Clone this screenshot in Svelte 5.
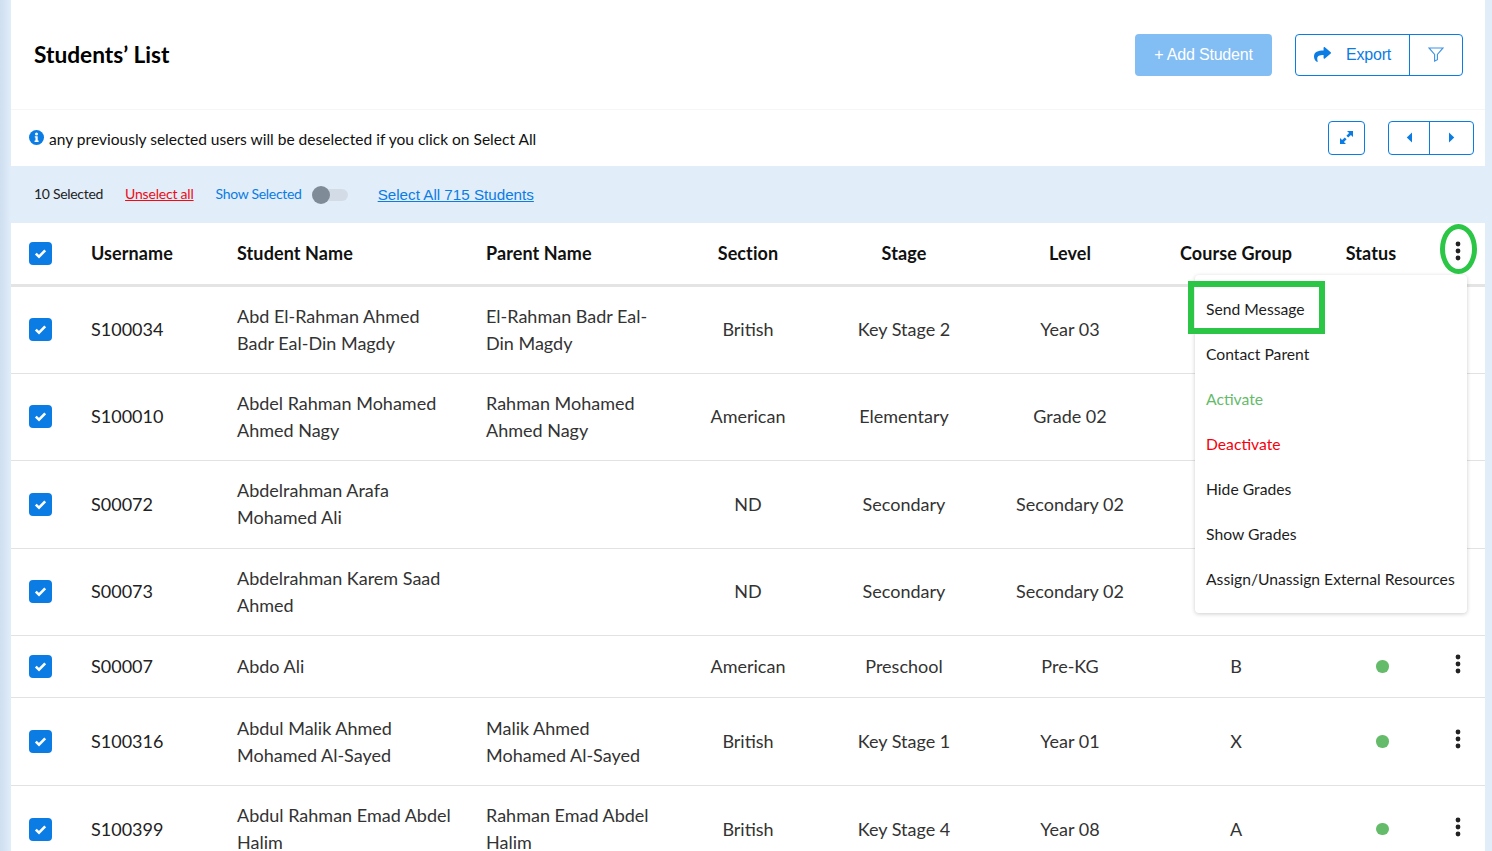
<script>
  const rows = [
    { id: 'S100034', name: 'Abd El-Rahman Ahmed Badr Eal-Din Magdy', parent: 'El-Rahman Badr Eal-Din Magdy', section: 'British', stage: 'Key Stage 2', level: 'Year 03', group: '', active: false },
    { id: 'S100010', name: 'Abdel Rahman Mohamed Ahmed Nagy', parent: 'Rahman Mohamed Ahmed Nagy', section: 'American', stage: 'Elementary', level: 'Grade 02', group: '', active: false },
    { id: 'S00072', name: 'Abdelrahman Arafa Mohamed Ali', parent: '', section: 'ND', stage: 'Secondary', level: 'Secondary 02', group: '', active: false },
    { id: 'S00073', name: 'Abdelrahman Karem Saad Ahmed', parent: '', section: 'ND', stage: 'Secondary', level: 'Secondary 02', group: '', active: false },
    { id: 'S00007', name: 'Abdo Ali', parent: '', section: 'American', stage: 'Preschool', level: 'Pre-KG', group: 'B', active: true },
    { id: 'S100316', name: 'Abdul Malik Ahmed Mohamed Al-Sayed', parent: 'Malik Ahmed Mohamed Al-Sayed', section: 'British', stage: 'Key Stage 1', level: 'Year 01', group: 'X', active: true },
    { id: 'S100399', name: 'Abdul Rahman Emad Abdel Halim', parent: 'Rahman Emad Abdel Halim', section: 'British', stage: 'Key Stage 4', level: 'Year 08', group: 'A', active: true }
  ];

  const actions = [
    { label: 'Send Message' },
    { label: 'Contact Parent' },
    { label: 'Activate', tone: 'green' },
    { label: 'Deactivate', tone: 'red' },
    { label: 'Hide Grades' },
    { label: 'Show Grades' },
    { label: 'Assign/Unassign External Resources' }
  ];
</script>

{#snippet check()}
  <span class="check">
    <svg width="13" height="11" viewBox="0 0 13 11"><path d="M1.8 5.6 L5 8.6 L11.2 2.4" fill="none" stroke="#fff" stroke-width="2.6" /></svg>
  </span>
{/snippet}

{#snippet kebab()}
  <svg class="kebab" width="6" height="20" viewBox="0 0 6 20">
    <circle cx="3" cy="3" r="2.4" /><circle cx="3" cy="10" r="2.4" /><circle cx="3" cy="17" r="2.4" />
  </svg>
{/snippet}

<main class="panel">
  <header class="top">
    <h1>Students’ List</h1>
    <div class="top-actions">
      <button class="add">+ Add Student</button>
      <div class="btn-group export">
        <button class="export-btn">
          <svg width="17" height="17" viewBox="0 0 512 512"><path fill="#0a7ce4" d="M503.691 189.836L327.687 37.851C312.281 24.546 288 35.347 288 56.015v80.053C127.371 137.907 0 170.1 0 322.326c0 61.441 39.581 122.309 83.333 154.132 13.653 9.931 33.111-2.533 28.077-18.631C66.066 312.814 132.917 274.316 288 272.085V360c0 20.7 24.3 31.453 39.687 18.164l176.004-152c11.071-9.562 11.086-26.753 0-36.328z" /></svg>
          <span>Export</span>
        </button>
        <button class="filter-btn" aria-label="Filter">
          <svg width="16" height="15" viewBox="0 0 17 16"><path d="M1 1 H16 L10 8 V13.5 L7 15 V8 Z" fill="none" stroke="#3f93e6" stroke-width="1.2" /></svg>
        </button>
      </div>
    </div>
  </header>

  <div class="notice">
    <svg class="info" width="15" height="15" viewBox="0 0 15 15">
      <circle cx="7.5" cy="7.5" r="7.5" fill="#0a7ce4" />
      <circle cx="7.5" cy="3.9" r="1.5" fill="#fff" />
      <path d="M5.8 6.2 H8.7 V10.6 H9.6 V12 H5.6 V10.6 H6.5 V7.6 H5.8 Z" fill="#fff" />
    </svg>
    <span class="notice-text">any previously selected users will be deselected if you click on Select All</span>
    <button class="icon-btn expand" aria-label="Expand">
      <svg width="13" height="13" viewBox="0 0 13 13" fill="#0a7ce4">
        <path d="M7 0 H13 V6 L10.9 3.9 L8.2 6.6 L6.4 4.8 L9.1 2.1 Z" />
        <path d="M6 13 H0 V7 L2.1 9.1 L4.8 6.4 L6.6 8.2 L3.9 10.9 Z" />
      </svg>
    </button>
    <div class="btn-group pager">
      <button aria-label="Previous"><svg width="7" height="11" viewBox="0 0 7 11"><path d="M6 0.5 V10.5 L0.8 5.5 Z" fill="#0a7ce4" /></svg></button>
      <button aria-label="Next"><svg width="7" height="11" viewBox="0 0 7 11"><path d="M1 0.5 V10.5 L6.2 5.5 Z" fill="#0a7ce4" /></svg></button>
    </div>
  </div>

  <div class="selection">
    <span class="count">10 Selected</span>
    <span class="unselect">Unselect all</span>
    <span class="show">Show Selected</span>
    <span class="toggle"><span class="knob"></span></span>
    <span class="select-all">Select All 715 Students</span>
  </div>

  <div class="row head">
    <div class="cell">{@render check()}</div>
    <div class="cell">Username</div>
    <div class="cell">Student Name</div>
    <div class="cell">Parent Name</div>
    <div class="cell mid">Section</div>
    <div class="cell mid">Stage</div>
    <div class="cell mid">Level</div>
    <div class="cell mid">Course Group</div>
    <div class="cell mid">Status</div>
    <div class="cell more">{@render kebab()}</div>
  </div>

  {#each rows as r}
    <div class="row">
      <div class="cell">{@render check()}</div>
      <div class="cell user">{r.id}</div>
      <div class="cell wrap">{r.name}</div>
      <div class="cell wrap">{r.parent}</div>
      <div class="cell mid">{r.section}</div>
      <div class="cell mid">{r.stage}</div>
      <div class="cell mid">{r.level}</div>
      <div class="cell mid">{r.group}</div>
      <div class="cell mid">{#if r.active}<span class="dot"></span>{/if}</div>
      <div class="cell more">{#if r.active}{@render kebab()}{/if}</div>
    </div>
  {/each}

  <ul class="menu">
    {#each actions as a}
      <li class={a.tone}>{a.label}</li>
    {/each}
  </ul>

  <span class="mark-rect"></span>
  <span class="mark-oval"></span>
</main>

<style>
  :global(body) {
    margin: 0;
    height: 100vh;
    overflow: hidden;
    background: linear-gradient(to right, #cfdff1 0, #d6e4f4 5px, #e1edf9 11px);
    font-family: Lato, sans-serif;
    color: #333;
  }

  .panel {
    position: relative;
    margin: 0 7px 0 11px;
    background: #fff;
  }

  button {
    font: inherit;
    background: none;
    border: none;
    padding: 0;
    display: flex;
    align-items: center;
    justify-content: center;
  }

  .top {
    display: flex;
    align-items: center;
    justify-content: space-between;
    height: 110px;
    box-sizing: border-box;
    padding: 0 22px 0 23px;
    border-bottom: 1px solid #f6f6f6;
  }

  h1 {
    margin: 0;
    font-size: 22.7px;
    font-weight: 700;
    color: #000;
  }

  .top-actions {
    display: flex;
    gap: 23px;
  }

  .add {
    width: 137px;
    height: 42px;
    border-radius: 4px;
    background: #82bdf4;
    color: #fff;
    font-family: 'Liberation Sans', sans-serif;
    font-size: 16px;
    letter-spacing: -0.2px;
  }

  .btn-group {
    display: flex;
    border: 1px solid #0a7ce4;
    border-radius: 4px;
    box-sizing: border-box;
  }

  .export {
    width: 168px;
    height: 42px;
  }

  .export-btn {
    width: 114px;
    border-right: 1px solid #0a7ce4;
    justify-content: flex-start;
    padding-left: 18px;
    gap: 15px;
    color: #0a7ce4;
    font-family: 'Liberation Sans', sans-serif;
    font-size: 16px;
    letter-spacing: -0.2px;
  }

  .filter-btn {
    flex: 1;
  }

  .notice {
    display: flex;
    align-items: center;
    height: 56px;
    padding: 0 11px 0 18px;
  }

  .info {
    margin: -2px 5px 0 0;
  }

  .notice-text {
    flex: 1;
    margin-top: 2px;
    font-size: 15.55px;
    color: #111;
  }

  .icon-btn {
    width: 37px;
    height: 34px;
    box-sizing: border-box;
    border: 1px solid #0a7ce4;
    border-radius: 4px;
    margin: -1px 23px 0 0;
  }

  .pager {
    width: 86px;
    height: 34px;
    margin-top: -1px;
  }

  .pager button {
    flex: 1;
  }

  .pager button:first-child {
    flex: none;
    width: 41px;
    border-right: 1px solid #0a7ce4;
  }

  .selection {
    display: flex;
    align-items: center;
    height: 57px;
    padding-left: 23px;
    background: #e1edf9;
    font-size: 14px;
  }

  .count {
    color: #222;
    letter-spacing: -0.3px;
    margin: -2px 22px 0 0;
  }

  .unselect {
    color: #f00a14;
    text-decoration: underline;
    letter-spacing: -0.2px;
    margin: -2px 22px 0 0;
  }

  .show {
    color: #0a7ce4;
    letter-spacing: -0.3px;
    margin: -2px 10px 0 0;
  }

  .toggle {
    position: relative;
    width: 36px;
    height: 12px;
    margin-right: 30px;
  }

  .toggle::before {
    content: '';
    position: absolute;
    left: 4px;
    right: 0;
    top: 0;
    bottom: 0;
    border-radius: 6px;
    background: #d3dce6;
  }

  .knob {
    position: absolute;
    left: 0;
    top: -3px;
    width: 18px;
    height: 18px;
    border-radius: 50%;
    background: #7f8c98;
  }

  .select-all {
    color: #0a7ce4;
    font-family: 'Liberation Sans', sans-serif;
    font-size: 15.2px;
    text-decoration: underline;
  }

  .row {
    display: grid;
    grid-template-columns: 80px 146px 249px 200px 124px 188px 144px 188px 82px 73px;
    align-items: center;
    min-height: 62.25px;
    box-sizing: border-box;
    border-bottom: 1px solid #e2e2e2;
    font-size: 18px;
    line-height: 27px;
  }

  .row .cell:first-child {
    padding-left: 18px;
    display: flex;
  }

  .head {
    height: 64px;
    border-bottom: 3px solid #e4e4e4;
    font-weight: 700;
    color: #111;
    letter-spacing: 0.1px;
  }

  .wrap {
    padding: 16.25px 30px;
    padding-left: 0;
  }

  .head + .row .wrap {
    padding-bottom: 15.25px;
  }

  .user {
    color: #222;
  }

  .mid {
    text-align: center;
  }

  .more {
    display: flex;
    padding-left: 43px;
    margin-top: -5px;
  }

  .check {
    display: flex;
    align-items: center;
    justify-content: center;
    width: 23px;
    height: 23px;
    border-radius: 4px;
    background: #0a7ce4;
  }

  .kebab {
    fill: #222;
  }

  .dot {
    display: block;
    width: 12.5px;
    height: 12.5px;
    margin-left: 46px;
    border-radius: 50%;
    background: #64bb6a;
  }

  .menu {
    position: absolute;
    top: 275px;
    left: 1184px;
    width: 272px;
    height: 338px;
    box-sizing: border-box;
    margin: 0;
    padding: 12px 0 0 11px;
    list-style: none;
    background: #fff;
    border-radius: 4px;
    box-shadow: 0 1px 4px rgba(0, 0, 0, 0.2);
  }

  .menu li {
    height: 45px;
    line-height: 45px;
    font-size: 15.7px;
    color: #1d1d1d;
    white-space: nowrap;
  }

  .menu .green {
    color: #64bb6a;
  }

  .menu .red {
    color: #f5000c;
  }

  .mark-rect {
    position: absolute;
    left: 1177px;
    top: 281px;
    width: 137px;
    height: 53px;
    box-sizing: border-box;
    border: 6px solid #2bc645;
  }

  .mark-oval {
    position: absolute;
    left: 1429px;
    top: 224px;
    width: 37px;
    height: 50px;
    box-sizing: border-box;
    border: 5px solid #2bc645;
    border-radius: 50%;
  }
</style>
